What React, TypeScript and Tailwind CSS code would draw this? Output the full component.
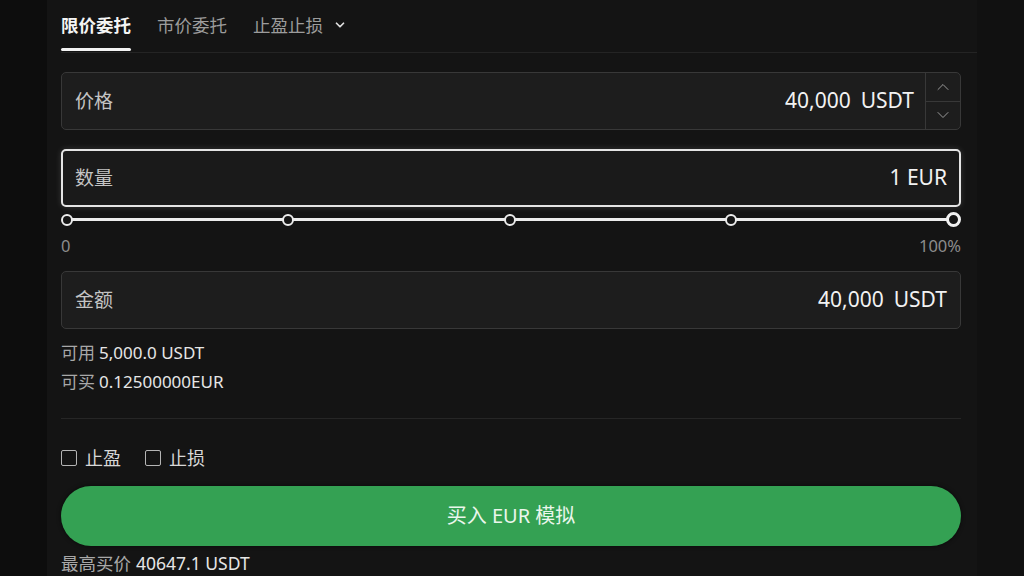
import React from "react";
import { ChevronDown, ChevronUp } from "lucide-react";

const font = { fontFamily: '"Noto Sans", "Noto Sans CJK SC", sans-serif' };

function Field({
  label,
  value,
  focused,
  stepper,
}: {
  label: string;
  value: React.ReactNode;
  focused?: boolean;
  stepper?: boolean;
}) {
  return (
    <div
      className={
        "flex h-[58px] items-stretch rounded-[5px] " +
        (focused
          ? "border-2 border-[#e4e4e4] bg-[#1a1a1a] shadow-[0_0_6px_rgba(255,255,255,0.15)]"
          : "border border-[#383838] bg-[#1d1d1d]")
      }
    >
      <div
        className={
          "flex flex-1 items-center justify-between " +
          (focused ? "pl-[12px] pr-[12px]" : "pl-[13px] " + (stepper ? "pr-[11px]" : "pr-[13px]"))
        }
      >
        <span className="text-[19px] text-[#c4c4c4]">{label}</span>
        <span className="text-[21px] text-[#f2f2f2]">{value}</span>
      </div>
      {stepper && (
        <div className="flex w-[35px] flex-col border-l border-[#383838]">
          <div className="flex flex-1 items-center justify-center border-b border-[#383838]">
            <ChevronUp size={20} strokeWidth={1.2} color="#9a9a9a" />
          </div>
          <div className="flex flex-1 items-center justify-center">
            <ChevronDown size={20} strokeWidth={1.2} color="#9a9a9a" />
          </div>
        </div>
      )}
    </div>
  );
}

function Dot({ big }: { big?: boolean }) {
  return big ? (
    <div className="h-[15px] w-[15px] rounded-full border-[3px] border-[#f0f0f0] bg-[#151515]" />
  ) : (
    <div className="h-[12px] w-[12px] rounded-full border-2 border-[#ececec] bg-[#151515]" />
  );
}

export default function App() {
  return (
    <div className="flex h-[576px] w-[1024px] overflow-hidden bg-[#0e0e0e]" style={font}>
      <div className="w-[47px] bg-[#0d0d0d]" />
      <div className="flex w-[930px] flex-col bg-[#141414] pl-[14px]">
        {/* tabs */}
        <div className="flex h-[53px] items-start gap-[26px] border-b border-[#242424]">
          <div className="flex flex-col">
            <span className="pt-[13px] text-[17.5px] font-bold leading-[24px] text-[#f5f5f5]">
              限价委托
            </span>
            <div className="mt-[11px] h-[3px] w-[70px] rounded-full bg-[#f2f2f2]" />
          </div>
          <span className="pt-[13px] text-[17.5px] leading-[24px] text-[#9c9c9c]">市价委托</span>
          <span className="flex items-center gap-[10px] pt-[13px] text-[17.5px] leading-[24px] text-[#9c9c9c]">
            止盈止损
            <ChevronDown size={14} strokeWidth={3} color="#e0e0e0" />
          </span>
        </div>

        <div className="flex flex-col pr-[16px]">
          <div className="mt-[19px]">
            <Field
              label="价格"
              stepper
              value={
                <span className="flex gap-[10px]">
                  <span>40,000</span>
                  <span>USDT</span>
                </span>
              }
            />
          </div>
          <div className="mt-[19px]">
            <Field label="数量" focused value="1 EUR" />
          </div>

          {/* slider */}
          <div className="relative mt-[5px] flex h-[15px] items-center justify-between">
            <div className="absolute left-[6px] right-[7px] top-[6px] h-[3px] rounded-full bg-[#ececec]" />
            <div className="relative flex w-full items-center justify-between">
              <Dot />
              <Dot />
              <Dot />
              <Dot />
              <Dot big />
            </div>
          </div>
          <div className="mt-[7px] flex justify-between text-[16.5px] leading-[24px] text-[#8c8c8c]">
            <span>0</span>
            <span>100%</span>
          </div>

          <div className="mt-[13px]">
            <Field
              label="金额"
              value={
                <span className="flex gap-[10px]">
                  <span>40,000</span>
                  <span>USDT</span>
                </span>
              }
            />
          </div>

          <div className="mt-[12px] flex gap-[4px] text-[17px] leading-[24px]">
            <span className="text-[#a8a8a8]">可用</span>
            <span className="text-[#e6e6e6]">5,000.0 USDT</span>
          </div>
          <div className="mt-[5px] flex gap-[4px] text-[17px] leading-[24px]">
            <span className="text-[#a8a8a8]">可买</span>
            <span className="text-[#e6e6e6]">0.12500000EUR</span>
          </div>

          <div className="mt-[24px] h-px bg-[#262626]" />

          <div className="mt-[27px] flex h-[24px] items-center text-[18px] text-[#d8d8d8]">
            <div className="h-[16px] w-[16px] rounded-[2px] border-[1.5px] border-[#b5b5b5]" />
            <span className="ml-[8px]">止盈</span>
            <div className="ml-[24px] h-[16px] w-[16px] rounded-[2px] border-[1.5px] border-[#b5b5b5]" />
            <span className="ml-[8px]">止损</span>
          </div>

          <button className="mt-[16px] flex h-[60px] items-center justify-center rounded-full bg-[#34a153] text-[20px] text-[#eaf6ec] shadow-[0_0_4px_rgba(0,0,0,0.6)]">
            买入 EUR 模拟
          </button>

          <div className="mt-[5px] flex gap-[5px] text-[17.5px] leading-[24px]">
            <span className="text-[#a8a8a8]">最高买价</span>
            <span className="text-[#e6e6e6]">40647.1 USDT</span>
          </div>
        </div>
      </div>
      <div className="flex-1 bg-[#111111]" />
    </div>
  );
}
